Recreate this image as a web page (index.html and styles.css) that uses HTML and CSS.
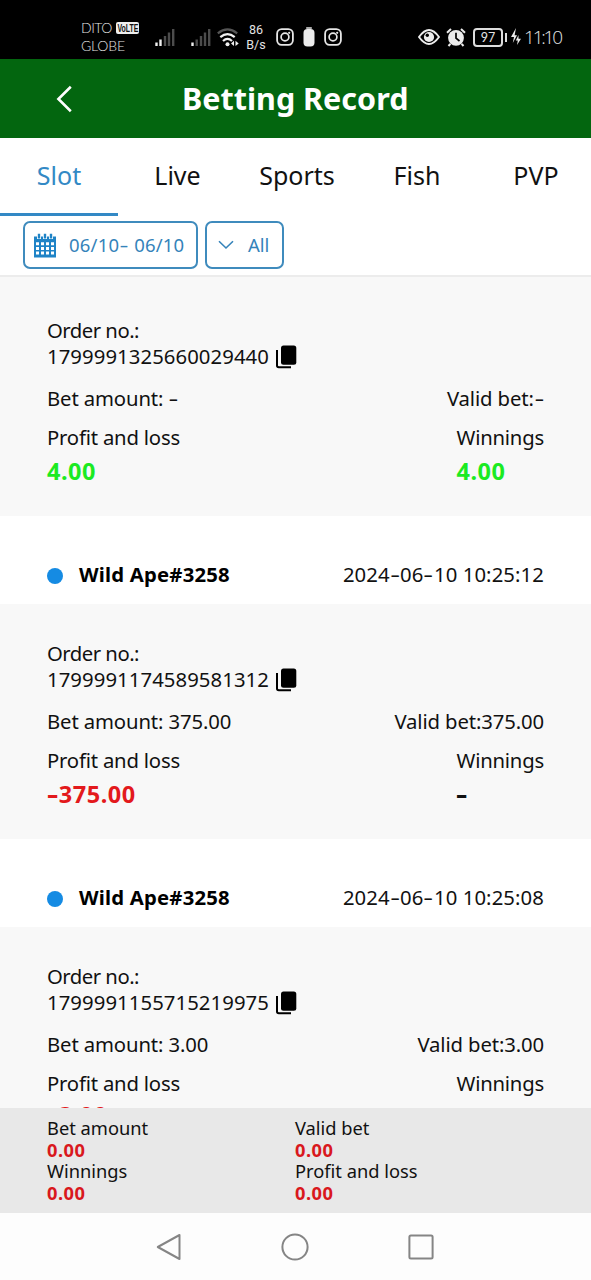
FILE: index.html
```html
<!DOCTYPE html>
<html lang="en">
<head>
<meta charset="utf-8">
<title>Betting Record</title>
<link rel="stylesheet" href="styles.css">
</head>
<body>
<svg class="sprite" width="0" height="0">
  <symbol id="copy" viewBox="0 0 22 24">
    <rect x="6" y="0.5" width="15.3" height="19.2" rx="2.5" fill="#000"/>
    <path d="M2 5V20.5Q2 22.3 3.8 22.3H16" fill="none" stroke="#000" stroke-width="2"/>
  </symbol>
  <symbol id="camera" viewBox="0 0 18 18">
    <rect x="1.1" y="1.1" width="15.8" height="15.8" rx="4.6" fill="none" stroke="#e6e6e6" stroke-width="1.8"/>
    <circle cx="9" cy="9" r="3.9" fill="none" stroke="#e6e6e6" stroke-width="1.7"/>
    <circle cx="13.2" cy="4.8" r="1.1" fill="#e6e6e6"/>
  </symbol>
</svg>
<div class="phone">
  <div class="status">
    <div class="carriers">
      <div class="carrier"><span class="dito">DITO</span><span class="volte"><span>VoLTE</span></span></div>
      <div class="carrier globe">GLOBE</div>
    </div>
    <svg class="signal first" width="20" height="19" viewBox="0 0 20 19">
      <path d="M1.5 18V14.5M5.5 18V11.5" stroke="#f0f0f0" stroke-width="2.4"/>
      <path d="M10 18V8M14 18V4.5M18.2 18V1" stroke="#4c4c4c" stroke-width="2.4"/>
    </svg>
    <svg class="signal second" width="20" height="19" viewBox="0 0 20 19">
      <path d="M1.5 18V14.5" stroke="#f0f0f0" stroke-width="2.4"/>
      <path d="M5.7 18V11.5M10 18V8M14 18V4.5M18.2 18V1" stroke="#4c4c4c" stroke-width="2.4"/>
    </svg>
    <svg class="wifi" width="22" height="19" viewBox="0 0 22 19" fill="none">
      <path d="M.8 5.3Q10.5-2.4 20.2 5.3" stroke="#555" stroke-width="2.2"/>
      <path d="M3.3 9.2Q10.5 3 17.7 9.2M6 13Q10.5 8.8 15 13" stroke="#f0f0f0" stroke-width="2.2"/>
      <circle cx="10.5" cy="16.3" r="2" fill="#f0f0f0"/>
      <path d="M17 12.8V18L14 15.4ZM18.5 12.8V18L21.7 15.4Z" fill="#f0f0f0"/>
    </svg>
    <div class="speed"><span>86</span><span>B/s</span></div>
    <svg class="cam-a" width="18" height="18"><use href="#camera"/></svg>
    <svg class="pill" width="12" height="20" viewBox="0 0 12 20"><path d="M3.2 0H8.8V2H3.2Z" fill="#aaa"/><rect x=".5" y="2" width="11" height="17.5" rx="4" fill="#ececec"/></svg>
    <svg class="cam-b" width="18" height="18"><use href="#camera"/></svg>
    <svg class="eye" width="22" height="16" viewBox="0 0 22 16">
      <path d="M1 8Q11-6 21 8Q11 22 1 8Z" fill="none" stroke="#ececec" stroke-width="1.9"/>
      <circle cx="11" cy="8" r="5.1" fill="#ececec"/><circle cx="9.3" cy="6.3" r="1.7" fill="#000"/>
    </svg>
    <svg class="alarm" width="20" height="19" viewBox="0 0 20 19">
      <circle cx="10" cy="9.8" r="7.9" fill="#ececec"/>
      <path d="M1 4.7L5 1M19 4.7L15 1M4.4 15.8L2.5 18M15.6 15.8L17.5 18" stroke="#ececec" stroke-width="2"/>
      <path d="M10 4.8V10.2L13.5 13" fill="none" stroke="#000" stroke-width="1.7"/>
    </svg>
    <div class="battery"><span>97</span></div>
    <div class="battery-tip"></div>
    <svg class="bolt" width="10" height="18" viewBox="0 0 10 18"><path d="M5 0L0 9H3L1.8 15L6 7.2H3.6ZM7.5 7L4.8 12.5H6.8L6 17L10 10.8H7.5Z" fill="#ececec"/></svg>
    <div class="clock">11:10</div>
  </div>

  <div class="header">
    <svg class="back" width="17" height="28" viewBox="0 0 17 28"><path d="M14.8 1.8L2.4 14L14.8 26.2" fill="none" stroke="#fff" stroke-width="2.6"/></svg>
    <h1>Betting Record</h1>
  </div>

  <div class="tabs">
    <div class="tab active"><span>Slot</span></div>
    <div class="tab"><span>Live</span></div>
    <div class="tab"><span>Sports</span></div>
    <div class="tab"><span>Fish</span></div>
    <div class="tab last"><span>PVP</span></div>
  </div>

  <div class="filters">
    <div class="filter date">
      <svg width="22" height="25" viewBox="0 0 22 25">
        <path d="M0 3.5H22V24.5H0Z" fill="#1f83c6"/>
        <path d="M5 0V6M11 0V6M17 0V6" stroke="#fff" stroke-width="4"/>
        <path d="M5 .8V5.5M11 .8V5.5M17 .8V5.5" stroke="#1f83c6" stroke-width="2.4"/>
        <path d="M2 10.8H20M2 15.4H20M2 20H20" stroke="#fff" stroke-width="3" stroke-dasharray="3 2"/>
      </svg>
      <span>06/10<span class="dash">-</span> 06/10</span>
    </div>
    <div class="filter kind">
      <svg width="16" height="10" viewBox="0 0 16 10"><path d="M1 1.2L8 8L15 1.2" fill="none" stroke="#3583ba" stroke-width="1.6"/></svg>
      <span>All</span>
    </div>
  </div>

  <div class="list">
    <div class="record top">
      <div class="line tight">Order no.:</div>
      <div class="line order"><span>1799991325660029440</span><svg width="22" height="24"><use href="#copy"/></svg></div>
      <div class="line pair bet"><span>Bet amount: <span class="dash">-</span></span><span>Valid bet:<span class="dash">-</span></span></div>
      <div class="results">
        <div><div class="line profit">Profit and loss</div><div class="value win">4.00</div></div>
        <div><div class="line wins">Winnings</div><div class="value win">4.00</div></div>
      </div>
    </div>
    <div class="title"><i class="dot"></i><b>Wild Ape#3258</b><time>2024<span class="dash">-</span>06<span class="dash">-</span>10 10:25:12</time></div>
    <div class="record">
      <div class="line tight">Order no.:</div>
      <div class="line order"><span>1799991174589581312</span><svg width="22" height="24"><use href="#copy"/></svg></div>
      <div class="line pair bet"><span>Bet amount: 375.00</span><span>Valid bet:375.00</span></div>
      <div class="results">
        <div><div class="line profit">Profit and loss</div><div class="value loss"><span class="dash">-</span>375.00</div></div>
        <div><div class="line wins">Winnings</div><div class="value"><span class="dash">-</span></div></div>
      </div>
    </div>
    <div class="title"><i class="dot"></i><b>Wild Ape#3258</b><time>2024<span class="dash">-</span>06<span class="dash">-</span>10 10:25:08</time></div>
    <div class="record">
      <div class="line tight">Order no.:</div>
      <div class="line order"><span>1799991155715219975</span><svg width="22" height="24"><use href="#copy"/></svg></div>
      <div class="line pair bet"><span>Bet amount: 3.00</span><span>Valid bet:3.00</span></div>
      <div class="results">
        <div><div class="line profit">Profit and loss</div><div class="value loss peek"><span class="dash">-</span>3.00</div></div>
        <div><div class="line wins">Winnings</div></div>
      </div>
    </div>
  </div>

  <div class="totals">
    <div><p>Bet amount</p><strong>0.00</strong></div>
    <div><p>Valid bet</p><strong>0.00</strong></div>
    <div><p>Winnings</p><strong>0.00</strong></div>
    <div><p>Profit and loss</p><strong>0.00</strong></div>
  </div>

  <div class="nav">
    <svg width="26" height="28" viewBox="0 0 26 28"><path d="M23.5 2V26L1.8 14Z" fill="none" stroke="#858585" stroke-width="2" stroke-linejoin="round"/></svg>
    <svg width="28" height="28" viewBox="0 0 28 28"><circle cx="14" cy="14" r="12.6" fill="none" stroke="#858585" stroke-width="2"/></svg>
    <svg width="26" height="26" viewBox="0 0 26 26"><rect x="1.4" y="1.4" width="23.2" height="23.2" rx="1.5" fill="none" stroke="#858585" stroke-width="2"/></svg>
  </div>
</div>
</body>
</html>
```

FILE: styles.css
```css
* { box-sizing: border-box; }
body { margin: 0; font-family: "Noto Sans", "Open Sans", sans-serif; color: #111; }
h1, p { margin: 0; }
svg { display: block; flex: none; }
.sprite { position: absolute; }
.phone { width: 591px; height: 1280px; display: flex; flex-direction: column; overflow: hidden; background: #fff; }
.dash { display: inline-block; transform: scaleX(1.5); margin: 0 1.9px; }

.status { height: 59px; flex: none; background: #000; color: #e4e4e4; display: flex; align-items: center; padding: 15px 0 0 81px; font-family: Lato, sans-serif; }
.carriers { width: 60px; font-size: 14px; font-weight: 300; line-height: 18px; margin-top: -1px; }
.carrier { display: flex; align-items: center; }
.dito { width: 35px; letter-spacing: -.5px; }
.volte { width: 23px; height: 12px; border-radius: 2px; background: #eee; color: #111; display: flex; justify-content: center; font: 700 10.5px/12px "Liberation Sans", sans-serif; }
.volte span { transform: scaleX(.66); }
.globe { letter-spacing: -.2px; }
.signal.first { margin-left: 14px; }
.signal.second { margin-left: 16px; }
.wifi { margin-left: 6px; }
.speed { width: 24px; margin-left: 5px; display: flex; flex-direction: column; align-items: center; font: 12.5px/15px Roboto, sans-serif; margin-top: -1px; }
.cam-a { margin-left: 8px; }
.pill { margin-left: 9px; }
.cam-b { margin-left: 9px; }
.eye { margin-left: 76px; }
.alarm { margin-left: 6px; }
.battery { width: 30px; height: 19px; margin-left: 7px; border: 2px solid #ddd; border-radius: 4px; font-size: 12.5px; line-height: 16px; text-align: center; }
.battery-tip { width: 2px; height: 9px; margin-left: 2px; background: #ddd; }
.bolt { margin-left: 4px; }
.clock { margin-left: 3px; font-family: "Open Sans", sans-serif; font-size: 19px; font-weight: 300; line-height: 22px; letter-spacing: -2.2px; white-space: nowrap; }

.header { height: 79px; flex: none; background: #03660f; display: flex; align-items: center; padding-left: 56px; }
.header h1 { margin: -2px 0 0 109px; color: #fff; font-size: 30.5px; line-height: 40px; font-weight: 700; letter-spacing: 0; white-space: nowrap; }

.tabs { height: 78px; flex: none; display: grid; grid-template-columns: 118px 119px 120px 120px 118px; font-size: 25px; line-height: 34px; }
.tab { padding-top: 20px; text-align: center; border-bottom: 3px solid transparent; }
.tab.active { color: #3389c5; border-color: #3389c5; }

.filters { height: 61px; flex: none; padding: 5px 0 0 23px; display: flex; gap: 7px; border-bottom: 2px solid #ececec; color: #3583ba; }
.filter { height: 48px; border: 2px solid #3f8bbd; border-radius: 7px; display: flex; align-items: center; font-size: 18.5px; white-space: nowrap; }
.filter > span { margin-top: -2px; }
.date { width: 175px; padding-left: 9px; gap: 13px; letter-spacing: .2px; }
.kind { width: 79px; padding-left: 11px; gap: 14px; }

.list { height: 831px; flex: none; overflow: hidden; font-size: 20.3px; }
.record { height: 235px; padding: 36px 47px 0; background: #f8f8f8; }
.record.top { height: 239px; padding-top: 40px; }
.line { line-height: 26px; white-space: nowrap; }
.tight { letter-spacing: -.5px; }
.profit { letter-spacing: -.2px; }
.wins { letter-spacing: -.2px; }
.order { display: flex; align-items: center; gap: 6px; letter-spacing: .08px; }
.order svg { position: relative; top: 1px; }
.pair { display: flex; justify-content: space-between; }
.bet { margin-top: 16px; letter-spacing: -.12px; }
.results { margin-top: 13px; display: flex; justify-content: space-between; }
.value { margin-top: 4px; font-size: 23.5px; line-height: 34px; font-weight: 700; letter-spacing: .5px; }
.peek { margin-top: 2px; }
.win { color: #1bea22; }
.loss { color: #e3191c; }
.title { height: 88px; padding: 30px 47px 0; display: flex; align-items: flex-start; line-height: 56px; color: #111; }
.title b { margin-left: 16px; color: #000; letter-spacing: .2px; }
.title time { margin-left: auto; letter-spacing: .1px; }
.dot { width: 16px; height: 16px; margin-top: 22px; border-radius: 50%; background: #158be3; }

.totals { height: 105px; flex: none; padding: 9px 47px 0; background: #e8e8e8; display: grid; grid-template-columns: 248px 1fr; grid-auto-rows: 43px; font-size: 18.3px; }
.totals p { line-height: 22px; }
.totals strong { display: block; line-height: 21px; letter-spacing: .5px; color: #d9181d; }

.nav { height: 67px; flex: none; padding-left: 156px; background: #fdfdfd; display: flex; align-items: center; }
.nav svg:nth-child(2) { margin-left: 99px; }
.nav svg:nth-child(3) { margin-left: 99px; }
```
